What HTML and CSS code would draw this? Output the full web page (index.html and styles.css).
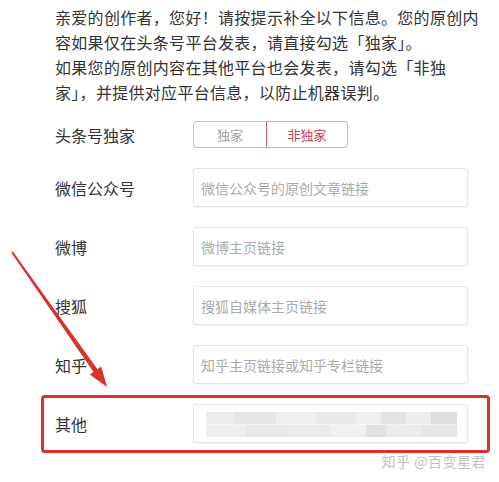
FILE: index.html
```html
<!DOCTYPE html>
<html lang="zh-CN">
<head>
  <meta charset="UTF-8">
  <meta name="viewport" content="width=device-width, initial-scale=1.0">
  <title>原创信息</title>
  <link rel="stylesheet" href="styles.css">
</head>
<body>
  <div class="page">
    <p class="intro">亲爱的创作者，您好！请按提示补全以下信息。您的原创内<br>容如果仅在头条号平台发表，请直接勾选「独家」。<br>如果您的原创内容在其他平台也会发表，请勾选「非独<br>家」，并提供对应平台信息，以防止机器误判。</p>

    <div class="form">
      <div class="row">
        <label class="label">头条号独家</label>
        <div class="toggle">
          <span class="seg">独家</span>
          <span class="seg active">非独家</span>
        </div>
      </div>
      <div class="row">
        <label class="label">微信公众号</label>
        <input class="field" type="text" placeholder="微信公众号的原创文章链接">
      </div>
      <div class="row">
        <label class="label">微博</label>
        <input class="field" type="text" placeholder="微博主页链接">
      </div>
      <div class="row">
        <label class="label">搜狐</label>
        <input class="field" type="text" placeholder="搜狐自媒体主页链接">
      </div>
      <div class="row">
        <label class="label">知乎</label>
        <input class="field" type="text" placeholder="知乎主页链接或知乎专栏链接">
      </div>
      <div class="row row-marked">
        <label class="label">其他</label>
        <div class="field field-blur"><div class="mosaic"></div></div>
        <div class="mark"></div>
      </div>
    </div>

    <div class="watermark">知乎 @百变星君</div>

    <!-- annotation arrow -->
    <svg class="arrow" viewBox="0 240 130 160">
      <polygon points="12.8,251.4 97.5,369.2 101.2,366.6 107,387 89.8,374.6 93.5,372 11.2,252.6" fill="#d8322b"/>
    </svg>
  </div>
</body>
</html>
```

FILE: styles.css
```css
* { margin: 0; padding: 0; box-sizing: border-box; }
body { background: #ffffff; color: #333333; font-family: "Noto Sans CJK SC", "Noto Sans", sans-serif; }
.page { position: relative; width: 499px; height: 482px; padding: 5px 0 0 55px; overflow: hidden; }
.intro { font-size: 16px; line-height: 25px; letter-spacing: 0.3px; color: #333; }

.form { display: flex; flex-direction: column; gap: 20px; margin-top: 16px; width: 413px; }
.row { position: relative; display: flex; align-items: center; }
.label { width: 138px; flex: none; font-size: 16px; color: #333; }

.toggle { display: flex; height: 27px; font-size: 13px; }
.seg { display: flex; align-items: center; justify-content: center; width: 73px; border: 1px solid #c6c6c6; border-right: none; border-radius: 4px 0 0 4px; color: #a0a0a0; }
.seg.active { width: 82px; border: 1px solid #cdb2b6; border-left: 1px solid #d0586a; border-radius: 0 4px 4px 0; color: #cc3f52; }

.field { flex: 1; height: 39px; border: 1px solid #e6e6e6; border-radius: 3px; box-shadow: 0 1px 2px rgba(0, 0, 0, 0.05); padding: 0 7px; font-family: inherit; font-size: 14px; color: #333; background: #fff; outline: none; }
.field::placeholder { color: #ababab; }
.field-blur { padding: 7px 10px 5px 12px; }
.mosaic {
  height: 100%;
  background:
    linear-gradient(to right, #ececec 0 28px, #e6e6e6 28px 70px, #eeeeee 70px 110px, #e9e9e9 110px 150px, #efefef 150px 175px, #e4e4e4 175px 200px, #ededed 200px 225px, #dedede 225px 253px) top / 100% 50% no-repeat,
    linear-gradient(to right, #eeeeee 0 40px, #e8e8e8 40px 80px, #eaeaea 80px 125px, #f0f0f0 125px 160px, #e2e2e2 160px 180px, #ececec 180px 215px, #e6e6e6 215px 253px) bottom / 100% 50% no-repeat;
}
.mark { position: absolute; top: -9px; right: -22px; bottom: -10px; left: -14px; border: 3px solid #d8322b; border-radius: 4px; pointer-events: none; }

.watermark { margin-top: 8px; text-align: right; padding-right: 13px; font-size: 14px; color: #c2c2c2; letter-spacing: 0.5px; }

.arrow { position: absolute; left: 0; top: 240px; width: 130px; height: 160px; }
```
